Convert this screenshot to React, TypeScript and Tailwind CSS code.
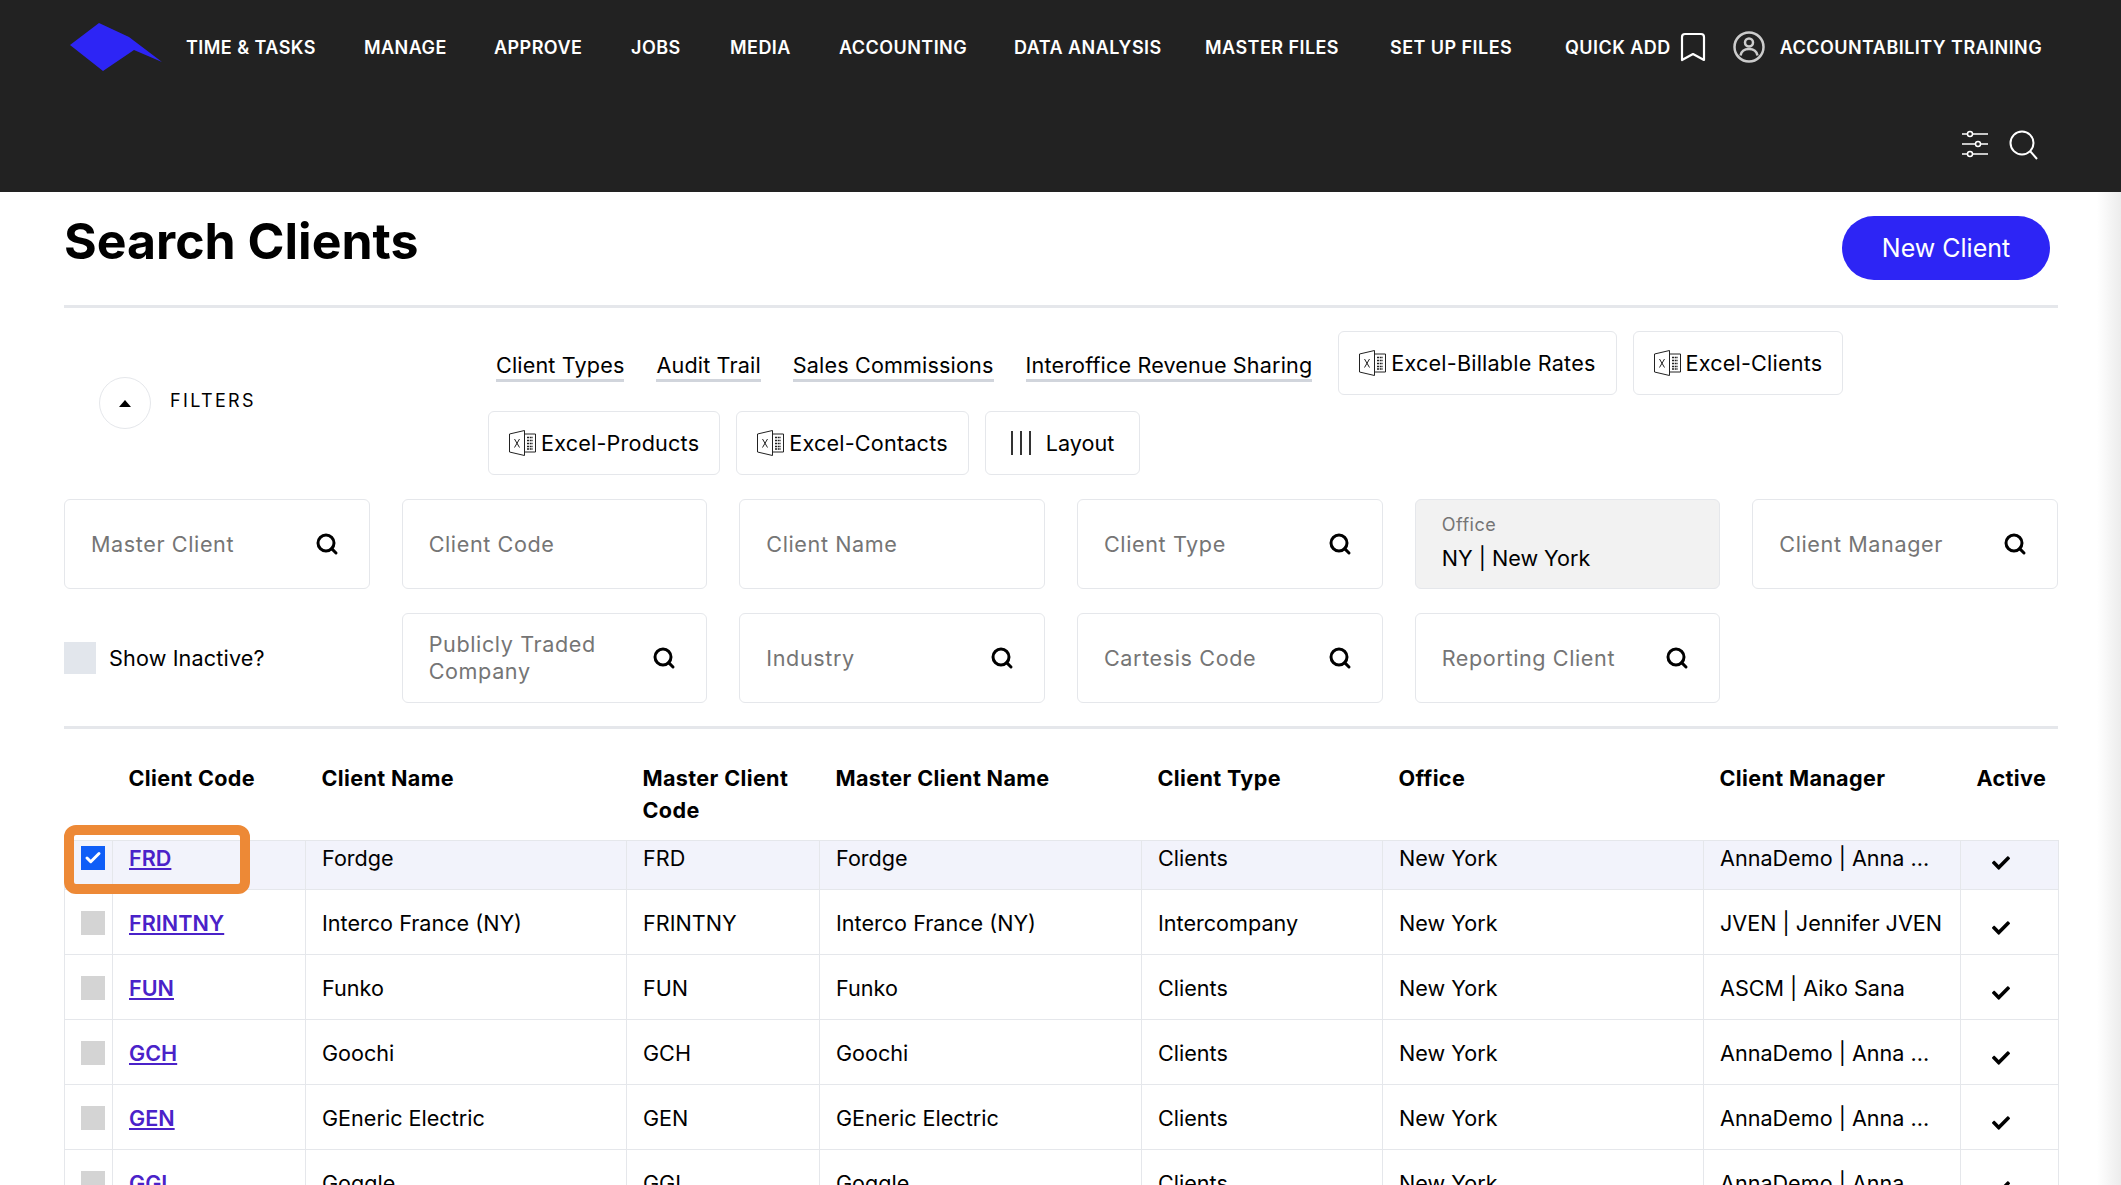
import { Check, Search } from "lucide-react";
import { FaCheck } from "react-icons/fa";

const font = "font-['Inter','Liberation_Sans',sans-serif]";

const navItems = [
  "TIME & TASKS",
  "MANAGE",
  "APPROVE",
  "JOBS",
  "MEDIA",
  "ACCOUNTING",
  "DATA ANALYSIS",
  "MASTER FILES",
  "SET UP FILES",
];

const rows = [
  ["FRD", "Fordge", "FRD", "Fordge", "Clients", "New York", "AnnaDemo | Anna ..."],
  ["FRINTNY", "Interco France (NY)", "FRINTNY", "Interco France (NY)", "Intercompany", "New York", "JVEN | Jennifer JVEN"],
  ["FUN", "Funko", "FUN", "Funko", "Clients", "New York", "ASCM | Aiko Sana"],
  ["GCH", "Goochi", "GCH", "Goochi", "Clients", "New York", "AnnaDemo | Anna ..."],
  ["GEN", "GEneric Electric", "GEN", "GEneric Electric", "Clients", "New York", "AnnaDemo | Anna ..."],
  ["GGL", "Goggle", "GGL", "Goggle", "Clients", "New York", "AnnaDemo | Anna ..."],
];

function ExcelIcon() {
  return (
    <svg width="27" height="26" viewBox="0 0 27 26" fill="none" stroke="#222" strokeWidth="1" className="shrink-0">
      <path d="M15.5 4h11v18h-11" />
      <path d="M18 7.5h6M18 10.5h6M18 13.5h6M18 16.5h6M18 19h6" strokeWidth="1.5" strokeDasharray="2 .7" />
      <path d="M.5 4 15.5.5v25L.5 22z" fill="#fff" strokeLinejoin="round" />
      <path d="M5.5 9l5 8.5M10.5 9l-5 8.5" />
    </svg>
  );
}

function ToolButton({ label }: { label: string }) {
  return (
    <div className="flex h-16 items-center gap-[5px] rounded-[6px] border border-gray-200 px-5 text-[21.6px] tracking-[0.2px] text-black">
      <ExcelIcon />
      {label}
    </div>
  );
}

function Field({ label, search = false }: { label: string; search?: boolean }) {
  return (
    <div className="flex h-[90px] items-center justify-between rounded-[6px] border border-gray-200 pl-[26px] pr-[30px] text-[21.6px] leading-[27px] tracking-[0.6px] text-[#757575]">
      <span>{label}</span>
      {search && <Search size={24} strokeWidth={3} className="shrink-0 text-black" />}
    </div>
  );
}

function NavIcons() {
  return (
    <>
      <svg width="26" height="30" viewBox="0 0 26 30" fill="none" stroke="#fff" strokeWidth="2.2" className="ml-[9px]">
        <path d="M2 5a3 3 0 0 1 3-3h16a3 3 0 0 1 3 3v23l-11-6-11 6z" strokeLinejoin="round" />
      </svg>
      <svg width="32" height="32" viewBox="0 0 32 32" fill="none" stroke="#ccc" strokeWidth="2.5" className="ml-[27px]">
        <circle cx="16" cy="16" r="14.5" />
        <circle cx="16" cy="11.5" r="4" />
        <path d="M7.5 24.5c1-5 5-6.500 8.500-6.500s7.500 1.500 8.500 6.500" />
      </svg>
    </>
  );
}

export default function App() {
  return (
    <div className={`flex h-screen flex-col overflow-hidden bg-white ${font}`}>
      <header className="flex h-[192px] shrink-0 flex-col bg-[#222222] text-white">
        <div className="flex h-[96px] items-center pl-[70px] pb-[2px]">
          <svg width="92" height="48" viewBox="0 0 92 48" className="mr-[24px] shrink-0">
            <path d="M0 22 29 0l30 14 33 25-28-12-31 21z" fill="#2d25f5" />
          </svg>
          <nav className="grid grid-cols-[178px_130px_137px_99px_109px_175px_191px_185px_175px_auto] items-center text-[18px] font-semibold tracking-[0.45px]">
            {navItems.map((item) => (
              <span key={item} className="whitespace-nowrap">{item}</span>
            ))}
            <span className="flex items-center whitespace-nowrap">
              QUICK ADD
              <NavIcons />
              <span className="ml-[15px]">ACCOUNTABILITY TRAINING</span>
            </span>
          </nav>
        </div>
        <div className="flex h-[96px] items-start justify-end gap-[21px] pr-[82px] pt-[34px]">
          <svg width="26" height="28" viewBox="0 0 26 28" fill="none" stroke="#fff" strokeWidth="1.5">
            <path d="M0 4h5.500M10.500 4H26M0 14h13.500M18.500 14H26M0 24h5.500M10.500 24H26" />
            <circle cx="8" cy="4" r="2.500" />
            <circle cx="16" cy="14" r="2.500" />
            <circle cx="8" cy="24" r="2.500" />
          </svg>
          <svg width="30" height="30" viewBox="0 0 30 30" fill="none" stroke="#fff" strokeWidth="2">
            <circle cx="13" cy="13" r="11.500" />
            <path d="M21 21l7 8" />
          </svg>
        </div>
      </header>

      <div className="flex min-h-0 flex-1">
        <main className="min-w-0 flex-1 pl-16 pr-[39px]">
          <div className="flex h-[116px] items-start justify-between border-b-[3px] border-gray-200 pr-2 pt-[24px]">
            <h1 className="text-[50px] font-bold leading-[50px] text-black">Search Clients</h1>
            <button className="h-16 w-[208px] rounded-full bg-[#2d25f5] pt-[1px] text-[25px] text-white">New Client</button>
          </div>

          <div className="flex pt-[23px]">
            <div className="flex w-[424px] shrink-0 items-start pl-[35px] pt-[46px]">
              <div className="flex h-[52px] w-[52px] items-center justify-center rounded-full border border-gray-200">
                <div className="h-0 w-0 border-x-[6px] border-b-[7px] border-x-transparent border-b-black" />
              </div>
              <span className="ml-[19px] pt-[12px] text-[18px] leading-[24px] tracking-[0.13em] text-black">FILTERS</span>
            </div>
            <div className="flex flex-wrap items-center gap-x-4 gap-y-4">
              <div className="flex items-center gap-8 pl-2 pr-[10px] pt-2 text-[21.6px] tracking-[0.15px] text-black">
                {["Client Types", "Audit Trail", "Sales Commissions", "Interoffice Revenue Sharing"].map((l) => (
                  <span key={l} className="border-b-[3px] border-gray-300 leading-[27px]">{l}</span>
                ))}
              </div>
              <ToolButton label="Excel-Billable Rates" />
              <ToolButton label="Excel-Clients" />
              <div className="flex w-full gap-4">
                <ToolButton label="Excel-Products" />
                <ToolButton label="Excel-Contacts" />
                <div className="flex h-16 items-center gap-[15px] rounded-[6px] border border-gray-200 pl-[25px] pr-[25px] text-[21.6px] text-black">
                  <svg width="20" height="24" viewBox="0 0 20 24" stroke="#333" strokeWidth="2">
                    <path d="M1 0v24M10 0v24M19 0v24" />
                  </svg>
                  Layout
                </div>
              </div>
            </div>
          </div>

          <div className="grid grid-cols-6 gap-x-8 gap-y-6 border-b-[3px] border-gray-200 pb-[23px] pt-6">
            <Field label="Master Client" search />
            <Field label="Client Code" />
            <Field label="Client Name" />
            <Field label="Client Type" search />
            <div className="flex h-[90px] flex-col rounded-[6px] border border-gray-200 bg-[#f2f2f2] pl-[26px] pt-[13px]">
              <span className="text-[18px] leading-[24px] tracking-[0.5px] text-[#757575]">Office</span>
              <span className="mt-[5px] text-[21.6px] leading-[32px] text-black">NY | New York</span>
            </div>
            <Field label="Client Manager" search />
            <div className="flex items-center gap-[13px] text-[21.6px] tracking-[0.15px] text-black">
              <div className="h-8 w-8 bg-[#e2e6ec]" />
              Show Inactive?
            </div>
            <Field label="Publicly Traded Company" search />
            <Field label="Industry" search />
            <Field label="Cartesis Code" search />
            <Field label="Reporting Client" search />
          </div>

          <div className="relative">
            <table className="w-[1994px] table-fixed border-collapse text-[21.6px] text-black">
              <colgroup>
                <col className="w-[48px]" />
                <col className="w-[193px]" />
                <col className="w-[321px]" />
                <col className="w-[193px]" />
                <col className="w-[322px]" />
                <col className="w-[241px]" />
                <col className="w-[321px]" />
                <col className="w-[257px]" />
                <col className="w-[98px]" />
              </colgroup>
              <thead>
                <tr className="h-[111px] text-left align-top text-[21.6px] font-bold leading-[32px] tracking-[0.35px]">
                  <th />
                  <th className="px-4 pt-[33px]">Client Code</th>
                  <th className="px-4 pt-[33px]">Client Name</th>
                  <th className="px-4 pt-[33px]">Master Client Code</th>
                  <th className="px-4 pt-[33px]">Master Client Name</th>
                  <th className="px-4 pt-[33px]">Client Type</th>
                  <th className="px-4 pt-[33px]">Office</th>
                  <th className="px-4 pt-[33px]">Client Manager</th>
                  <th className="px-4 pt-[33px]">Active</th>
                </tr>
              </thead>
              <tbody>
                {rows.map((r, i) => {
                  const first = i === 0;
                  return (
                    <tr key={r[0]} className={first ? "h-[49px] bg-[#f2f3fb]" : "h-[65px]"}>
                      <td className="border border-gray-200 p-0 pl-[16px] align-top">
                        <div className={`flex h-6 w-6 items-center justify-center ${first ? "mt-[5px] bg-[#0f5ef7]" : "mt-[21px] bg-[#d4d4d4]"}`}>
                          {first && <Check size={18} strokeWidth={4} className="text-white" />}
                        </div>
                      </td>
                      <td className={`border border-gray-200 px-4 align-top leading-[32px] ${first ? "pt-[1px]" : "pt-[17px]"}`}>
                        <a className="font-semibold text-[#4a22c9] underline">{r[0]}</a>
                      </td>
                      {r.slice(1).map((c, j) => (
                        <td key={j} className={`truncate border border-gray-200 px-4 align-top leading-[32px] ${first ? "pt-[1px]" : "pt-[17px]"}`}>
                          {c}
                        </td>
                      ))}
                      <td className="border border-gray-200 p-0 pl-[31px] align-top">
                        <FaCheck size={18} className={first ? "mt-[13px]" : "mt-[29px]"} />
                      </td>
                    </tr>
                  );
                })}
              </tbody>
            </table>
            <div className="absolute left-0 top-[96px] h-[69px] w-[186px] rounded-[12px] border-[10px] border-[#ed8936]" />
          </div>
        </main>
        <div className="w-6 shrink-0 bg-gradient-to-r from-white to-[#ececec]" />
      </div>
    </div>
  );
}
